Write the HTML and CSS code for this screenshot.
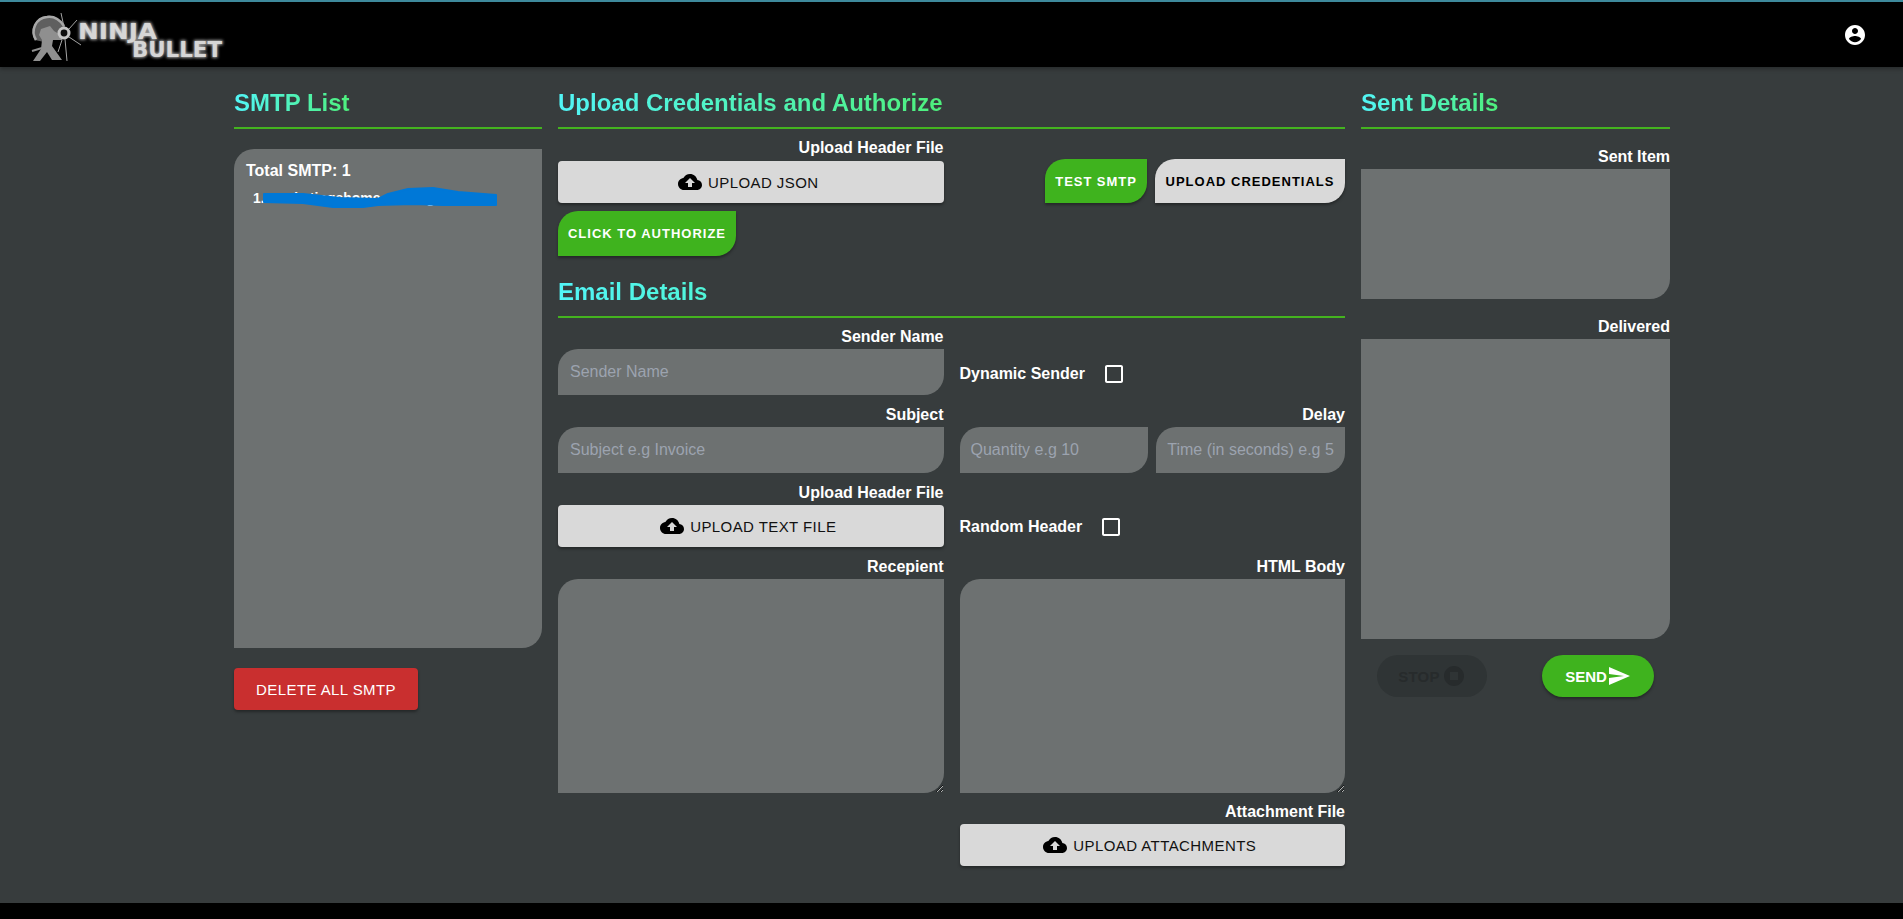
FILE: index.html
```html
<!DOCTYPE html>
<html lang="en">
<head>
<meta charset="utf-8">
<title>Ninja Bullet</title>
<link rel="stylesheet" href="styles.css">
</head>
<body>
<div class="page">
  <header class="topbar">
    <svg class="logo" viewBox="24 6 210 56" width="210" height="56" aria-label="Ninja Bullet logo">
      <defs><filter id="glow" x="-20%" y="-40%" width="140%" height="180%"><feGaussianBlur stdDeviation="1.8"/></filter>
      <filter id="soft" x="-10%" y="-10%" width="120%" height="120%"><feGaussianBlur stdDeviation=".5"/></filter></defs>
      <g filter="url(#soft)">
        <path fill="#5f5f5f" d="M35 38C29 28 35 15 47 14C54 13 60 17 65 24L60 34L44 40Z"/>
        <path fill="none" stroke="#a8a8a8" stroke-width="2.5" d="M36 38C30 28 36 16 47 15C54 14 60 18 64 24"/>
        <path fill="#8f8f8f" d="M41 27L50 24L54 29L64 35L62 38L53 38L52 44L62 58L52 58L47 50L40 59L33 59L41 47L42 38L39 33Z"/>
        <path fill="none" stroke="#8f8f8f" stroke-width="2" d="M32 49L42 46"/>
        <circle cx="64" cy="31" r="6.5" fill="#c4c4c4"/><circle cx="64" cy="31" r="3.4" fill="#0a0a0a"/>
        <path stroke="#a5a5a5" stroke-width="1" fill="none" d="M61 11L64 25M77 18L69 27M81 43L69 35M67 59L65 37M58 50L62 38"/>
      </g>
      <g class="logo-type">
        <text class="logo-glow" x="78" y="37" textLength="79" lengthAdjust="spacingAndGlyphs" filter="url(#glow)">NINJA</text>
        <text class="logo-glow" x="132" y="55" textLength="90" lengthAdjust="spacingAndGlyphs" filter="url(#glow)">BULLET</text>
        <text x="78" y="37" textLength="79" lengthAdjust="spacingAndGlyphs">NINJA</text>
        <text x="132" y="55" textLength="90" lengthAdjust="spacingAndGlyphs">BULLET</text>
      </g>
    </svg>
    <svg class="account" viewBox="0 0 24 24" width="24" height="24"><path d="M12 2C6.48 2 2 6.48 2 12s4.48 10 10 10 10-4.48 10-10S17.52 2 12 2zm0 3c1.66 0 3 1.34 3 3s-1.34 3-3 3-3-1.34-3-3 1.34-3 3-3zm0 14.2c-2.5 0-4.71-1.28-6-3.22.03-1.99 4-3.08 6-3.08 1.99 0 5.97 1.09 6 3.08-1.29 1.94-3.5 3.22-6 3.22z"/></svg>
  </header>

  <main class="content">
    <section class="col-left">
      <h2 class="heading"><span class="grad">SMTP List</span></h2>
      <div class="smtp-box">
        <div class="smtp-total">Total SMTP: 1</div>
        <div class="smtp-item">1. marketingshome.mail@gmail.com
          <svg class="scribble" viewBox="0 0 234 22" width="234" height="22"><path d="M1 7L40 7L77 11L115 12L125 7L145 2L170 1L195 5L233 8L233 18L180 18L150 17L115 18L100 20L70 20L40 16L1 15Z" fill="#0078d7" stroke="#0078d7" stroke-width="2" stroke-linejoin="round"/></svg>
        </div>
      </div>
      <button class="btn btn-danger" type="button">DELETE ALL SMTP</button>
    </section>

    <section class="col-mid">
      <h2 class="heading"><span class="grad">Upload Credentials and Authorize</span></h2>
      <div class="cred-grid">
        <div class="field">
          <label class="label">Upload Header File</label>
          <button class="btn btn-upload" type="button"><svg class="cloud" viewBox="0 0 24 24" width="24" height="24"><path d="M19.35 10.04C18.67 6.59 15.64 4 12 4 9.11 4 6.6 5.64 5.35 8.04 2.34 8.36 0 10.91 0 14c0 3.31 2.69 6 6 6h13c2.76 0 5-2.24 5-5 0-2.64-2.05-4.78-4.65-4.96zM14 13v4h-4v-4H7l5-5 5 5h-3z"/></svg>UPLOAD JSON</button>
        </div>
        <div class="cred-actions">
          <button class="btn btn-leaf btn-green btn-test" type="button">TEST SMTP</button>
          <button class="btn btn-leaf btn-grey btn-cred" type="button">UPLOAD CREDENTIALS</button>
        </div>
      </div>
      <button class="btn btn-leaf btn-green btn-auth" type="button">CLICK TO AUTHORIZE</button>

      <h2 class="heading heading-second"><span class="grad grad-wide">Email Details</span></h2>
      <div class="form-grid">
        <div class="field">
          <label class="label">Sender Name</label>
          <input class="input" type="text" placeholder="Sender Name">
        </div>
        <div class="check-row check-row-sender">
          <span class="check-label">Dynamic Sender</span>
          <svg class="check" viewBox="0 0 24 24" width="24" height="24"><path d="M19 5v14H5V5h14m0-2H5c-1.1 0-2 .9-2 2v14c0 1.1.9 2 2 2h14c1.1 0 2-.9 2-2V5c0-1.1-.9-2-2-2z"/></svg>
        </div>

        <div class="field">
          <label class="label">Subject</label>
          <input class="input" type="text" placeholder="Subject e.g Invoice">
        </div>
        <div class="field">
          <label class="label">Delay</label>
          <div class="delay-row">
            <input class="input input-small" type="text" placeholder="Quantity e.g 10">
            <input class="input input-small" type="text" placeholder="Time (in seconds) e.g 5">
          </div>
        </div>

        <div class="field">
          <label class="label">Upload Header File</label>
          <button class="btn btn-upload" type="button"><svg class="cloud" viewBox="0 0 24 24" width="24" height="24"><path d="M19.35 10.04C18.67 6.59 15.64 4 12 4 9.11 4 6.6 5.64 5.35 8.04 2.34 8.36 0 10.91 0 14c0 3.31 2.69 6 6 6h13c2.76 0 5-2.24 5-5 0-2.64-2.05-4.78-4.65-4.96zM14 13v4h-4v-4H7l5-5 5 5h-3z"/></svg>UPLOAD TEXT FILE</button>
        </div>
        <div class="check-row check-row-header">
          <span class="check-label">Random Header</span>
          <svg class="check" viewBox="0 0 24 24" width="24" height="24"><path d="M19 5v14H5V5h14m0-2H5c-1.1 0-2 .9-2 2v14c0 1.1.9 2 2 2h14c1.1 0 2-.9 2-2V5c0-1.1-.9-2-2-2z"/></svg>
        </div>

        <div class="field">
          <label class="label">Recepient</label>
          <textarea class="textarea"></textarea>
        </div>
        <div class="field">
          <label class="label">HTML Body</label>
          <textarea class="textarea"></textarea>
        </div>

        <div class="field field-attach">
          <label class="label">Attachment File</label>
          <button class="btn btn-upload" type="button"><svg class="cloud" viewBox="0 0 24 24" width="24" height="24"><path d="M19.35 10.04C18.67 6.59 15.64 4 12 4 9.11 4 6.6 5.64 5.35 8.04 2.34 8.36 0 10.91 0 14c0 3.31 2.69 6 6 6h13c2.76 0 5-2.24 5-5 0-2.64-2.05-4.78-4.65-4.96zM14 13v4h-4v-4H7l5-5 5 5h-3z"/></svg>UPLOAD ATTACHMENTS</button>
        </div>
      </div>
    </section>

    <section class="col-right">
      <h2 class="heading"><span class="grad">Sent Details</span></h2>
      <div class="field field-sent">
        <label class="label">Sent Item</label>
        <div class="panel panel-sent"></div>
      </div>
      <div class="field field-delivered">
        <label class="label">Delivered</label>
        <div class="panel panel-delivered"></div>
      </div>
      <div class="send-row">
        <button class="pill pill-stop" type="button" disabled>STOP<svg viewBox="0 0 24 24" width="24" height="24"><path d="M12 2C6.48 2 2 6.48 2 12s4.48 10 10 10 10-4.48 10-10S17.52 2 12 2zm4 14H8V8h8v8z"/></svg></button>
        <button class="pill pill-send" type="button">SEND<svg viewBox="0 0 24 24" width="24" height="24"><path d="M2.01 21L23 12 2.01 3 2 10l15 2-15 2z"/></svg></button>
      </div>
    </section>
  </main>

  <footer class="footer"></footer>
</div>
</body>
</html>
```

FILE: styles.css
```css
* { box-sizing: border-box; }
html, body { margin: 0; padding: 0; height: 100%; overflow: hidden; }
body { font-family: "Liberation Sans", Arial, sans-serif; color: #fff; background: #373c3d; }
.page { height: 100vh; display: flex; flex-direction: column; }

.topbar { height: 67px; flex: none; background: #000; border-top: 2px solid #3e8a9c; display: flex; align-items: center; justify-content: space-between; padding: 0 36px 0 24px; box-shadow: 0 2px 4px rgba(0,0,0,.3); }
.logo { display: block; margin-top: 2px; }
.logo-type text { font-family: "DejaVu Sans", sans-serif; font-weight: 700; font-size: 22px; fill: #d6d6d6; }
.logo-type .logo-glow { fill: #b0b0b0; stroke: #b0b0b0; stroke-width: 1.5px; }
.account { fill: #fff; display: block; margin-top: 1px; }

.content { flex: 1; display: grid; grid-template-columns: 308px 787px 309px; column-gap: 16px; justify-content: center; padding-top: 24px; align-items: start; padding-left: 1px; }

.heading { margin: 0; font-size: 24px; line-height: 24px; font-weight: 700; padding-bottom: 12px; border-bottom: 2px solid #44b31f; }
.grad { display: inline-block; background: linear-gradient(90deg, #52f5f7, #4ef07c); -webkit-background-clip: text; background-clip: text; color: transparent; }
.grad-wide { background-image: linear-gradient(90deg, #52f5f7, #50f5d8); }
.heading-second { margin-top: 24px; }

.smtp-box { margin-top: 20px; height: 499px; background: #6d7171; border-radius: 20px 0 20px 0; padding: 13px 12px; }
.smtp-total { font-size: 16px; line-height: 18px; font-weight: 700; }
.smtp-item { position: relative; margin-top: 9px; padding-left: 7px; font-size: 14px; line-height: 18px; font-weight: 700; }
.scribble { position: absolute; left: 17px; top: -2px; }

.btn { display: flex; align-items: center; justify-content: center; border: 0; font-family: inherit; cursor: pointer; }
.btn-danger { margin-top: 20px; width: 184px; height: 42px; background: #c92f2f; color: #fff; border-radius: 4px; font-size: 15px; letter-spacing: .42px; box-shadow: 0 2px 3px rgba(0,0,0,.35); }
.btn-upload { width: 100%; height: 42px; padding: 0 5px 0 0; background: #d9d9d9; color: #111; border-radius: 4px; font-size: 15px; letter-spacing: .42px; gap: 6px; box-shadow: 0 2px 3px rgba(0,0,0,.35); }
.cloud { fill: #000; display: block; }
.btn-leaf { border-radius: 20px 0 20px 0; font-weight: 700; box-shadow: 0 2px 3px rgba(0,0,0,.35); }
.btn-green { background: #3fb31e; color: #fff; }
.btn-grey { background: #d9d9d9; color: #000; }
.btn-test { width: 102px; height: 44px; font-size: 13px; letter-spacing: .95px; }
.btn-cred { width: 190px; height: 44px; font-size: 13px; letter-spacing: 1px; }
.btn-auth { width: 178px; height: 45px; margin-top: 8px; font-size: 13px; letter-spacing: 1px; }

.cred-grid { display: grid; grid-template-columns: 1fr 1fr; column-gap: 16px; margin-top: 11px; }
.cred-actions { display: flex; justify-content: flex-end; align-items: flex-end; gap: 8px; }

.form-grid { display: grid; grid-template-columns: 1fr 1fr; column-gap: 16px; row-gap: 12px; margin-top: 11px; }
.field { display: flex; flex-direction: column; gap: 4px; }
.cred-grid .field { gap: 5px; }
.label { font-size: 16px; line-height: 16px; font-weight: 700; text-align: right; }
.input { width: 100%; height: 46px; border: 0; outline: 0; background: #6d7171; border-radius: 20px 0 20px 0; padding: 0 11px 0 12px; font-family: inherit; font-size: 16px; color: #fff; }
.input::placeholder { color: #9ca3af; opacity: 1; }
.input-small { min-width: 0; flex: 1; padding: 0 10px 0 11px; }
.delay-row { display: flex; gap: 8px; }
.textarea { display: block; width: 100%; height: 214px; border: 0; outline: 0; background: #6d7171; border-radius: 20px 0 20px 0; font-family: inherit; color: #fff; }
.field-attach { grid-column: 2; margin-top: -1px; }

.check-row { display: flex; align-items: center; align-self: end; height: 46px; }
.check-row-sender { padding-top: 4px; }
.check-row-header { height: 42px; padding-top: 2px; }
.check-label { font-size: 16px; font-weight: 700; }
.check { fill: #fff; display: block; }
.check-row-sender .check { margin-left: 17px; }
.check-row-header .check { margin-left: 17px; }

.field-sent { margin-top: 20px; }
.field-delivered { margin-top: 20px; }
.panel { background: #6d7171; border-radius: 0 0 20px 0; }
.panel-sent { height: 130px; }
.panel-delivered { height: 300px; }

.send-row { display: flex; justify-content: space-between; padding: 0 16px; margin-top: 16px; }
.pill { display: flex; align-items: center; justify-content: center; height: 42px; border: 0; border-radius: 21px; font-family: inherit; font-size: 15px; font-weight: 700; }
.pill svg { display: block; }
.pill-stop { width: 110px; background: #2f3435; color: #272b2c; letter-spacing: .2px; gap: 2px; }
.pill-stop svg { fill: #272b2c; }
.pill-send { width: 112px; background: #3fb31e; color: #fff; box-shadow: 0 2px 3px rgba(0,0,0,.35); }
.pill-send svg { fill: #fff; }

.footer { height: 16px; flex: none; background: #000; }
```
